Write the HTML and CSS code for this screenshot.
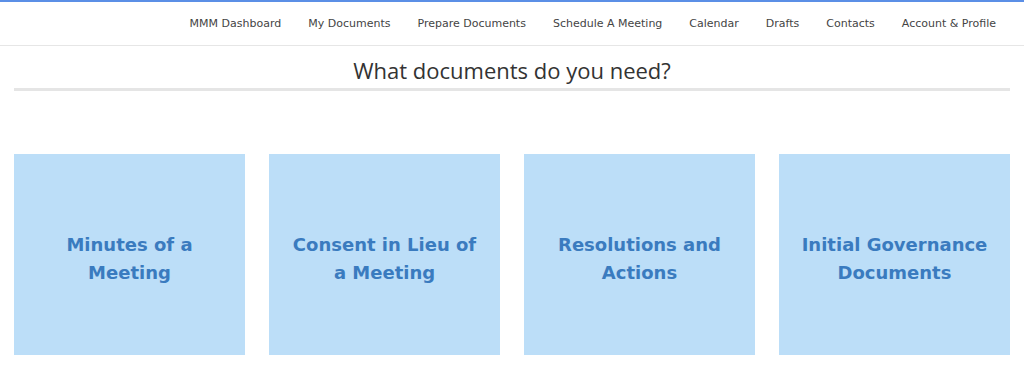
FILE: index.html
```html
<!DOCTYPE html>
<html lang="en">
<head>
    <meta charset="UTF-8">
    <meta name="viewport" content="width=device-width, initial-scale=1.0">
    <title>What documents do you need?</title>
    <link rel="stylesheet" href="styles.css">
</head>
<body>
    <header class="topbar">
        <nav class="nav">
            <a href="#">MMM Dashboard</a>
            <a href="#">My Documents</a>
            <a href="#">Prepare Documents</a>
            <a href="#">Schedule A Meeting</a>
            <a href="#">Calendar</a>
            <a href="#">Drafts</a>
            <a href="#">Contacts</a>
            <a href="#">Account &amp; Profile</a>
        </nav>
    </header>

    <main class="container">
        <h1 class="title">What documents do you need?</h1>

        <div class="cards">
            <a class="card" href="#">Minutes of a<br>Meeting</a>
            <a class="card" href="#">Consent in Lieu of<br>a Meeting</a>
            <a class="card" href="#">Resolutions and<br>Actions</a>
            <a class="card" href="#">Initial Governance<br>Documents</a>
        </div>
    </main>
</body>
</html>
```

FILE: styles.css
```css
body {
    margin: 0;
    background: #fff;
    color: #333;
    font-family: "Open Sans", Arial, sans-serif;
}
.topbar {
    border-top: 2px solid #5b8fe6;
    border-bottom: 1px solid #e6e6e6;
    height: 43px;
    display: flex;
    justify-content: flex-end;
    align-items: center;
    padding-right: 28px;
}
.nav {
    display: flex;
    gap: 27px;
}
.nav a {
    color: #444;
    text-decoration: none;
    font-family: "DejaVu Sans", sans-serif;
    font-size: 11px;
    font-weight: 500;
}
.container {
    margin: 0 14px;
}
.title {
    margin: 0;
    padding: 9px 0 3px;
    line-height: 30px;
    text-align: center;
    font-size: 22px;
    font-weight: 400;
    color: #333;
    border-bottom: 3px solid #e5e5e5;
}
.cards {
    display: grid;
    grid-template-columns: repeat(4, 1fr);
    gap: 24px;
    margin-top: 63px;
}
.card {
    box-sizing: border-box;
    height: 201px;
    padding-top: 8px;
    background: #bcdef8;
    color: #3a7bbf;
    text-decoration: none;
    display: flex;
    align-items: center;
    justify-content: center;
    text-align: center;
    font-family: "DejaVu Sans", sans-serif;
    font-weight: 700;
    font-size: 18px;
    line-height: 28px;
}
```
